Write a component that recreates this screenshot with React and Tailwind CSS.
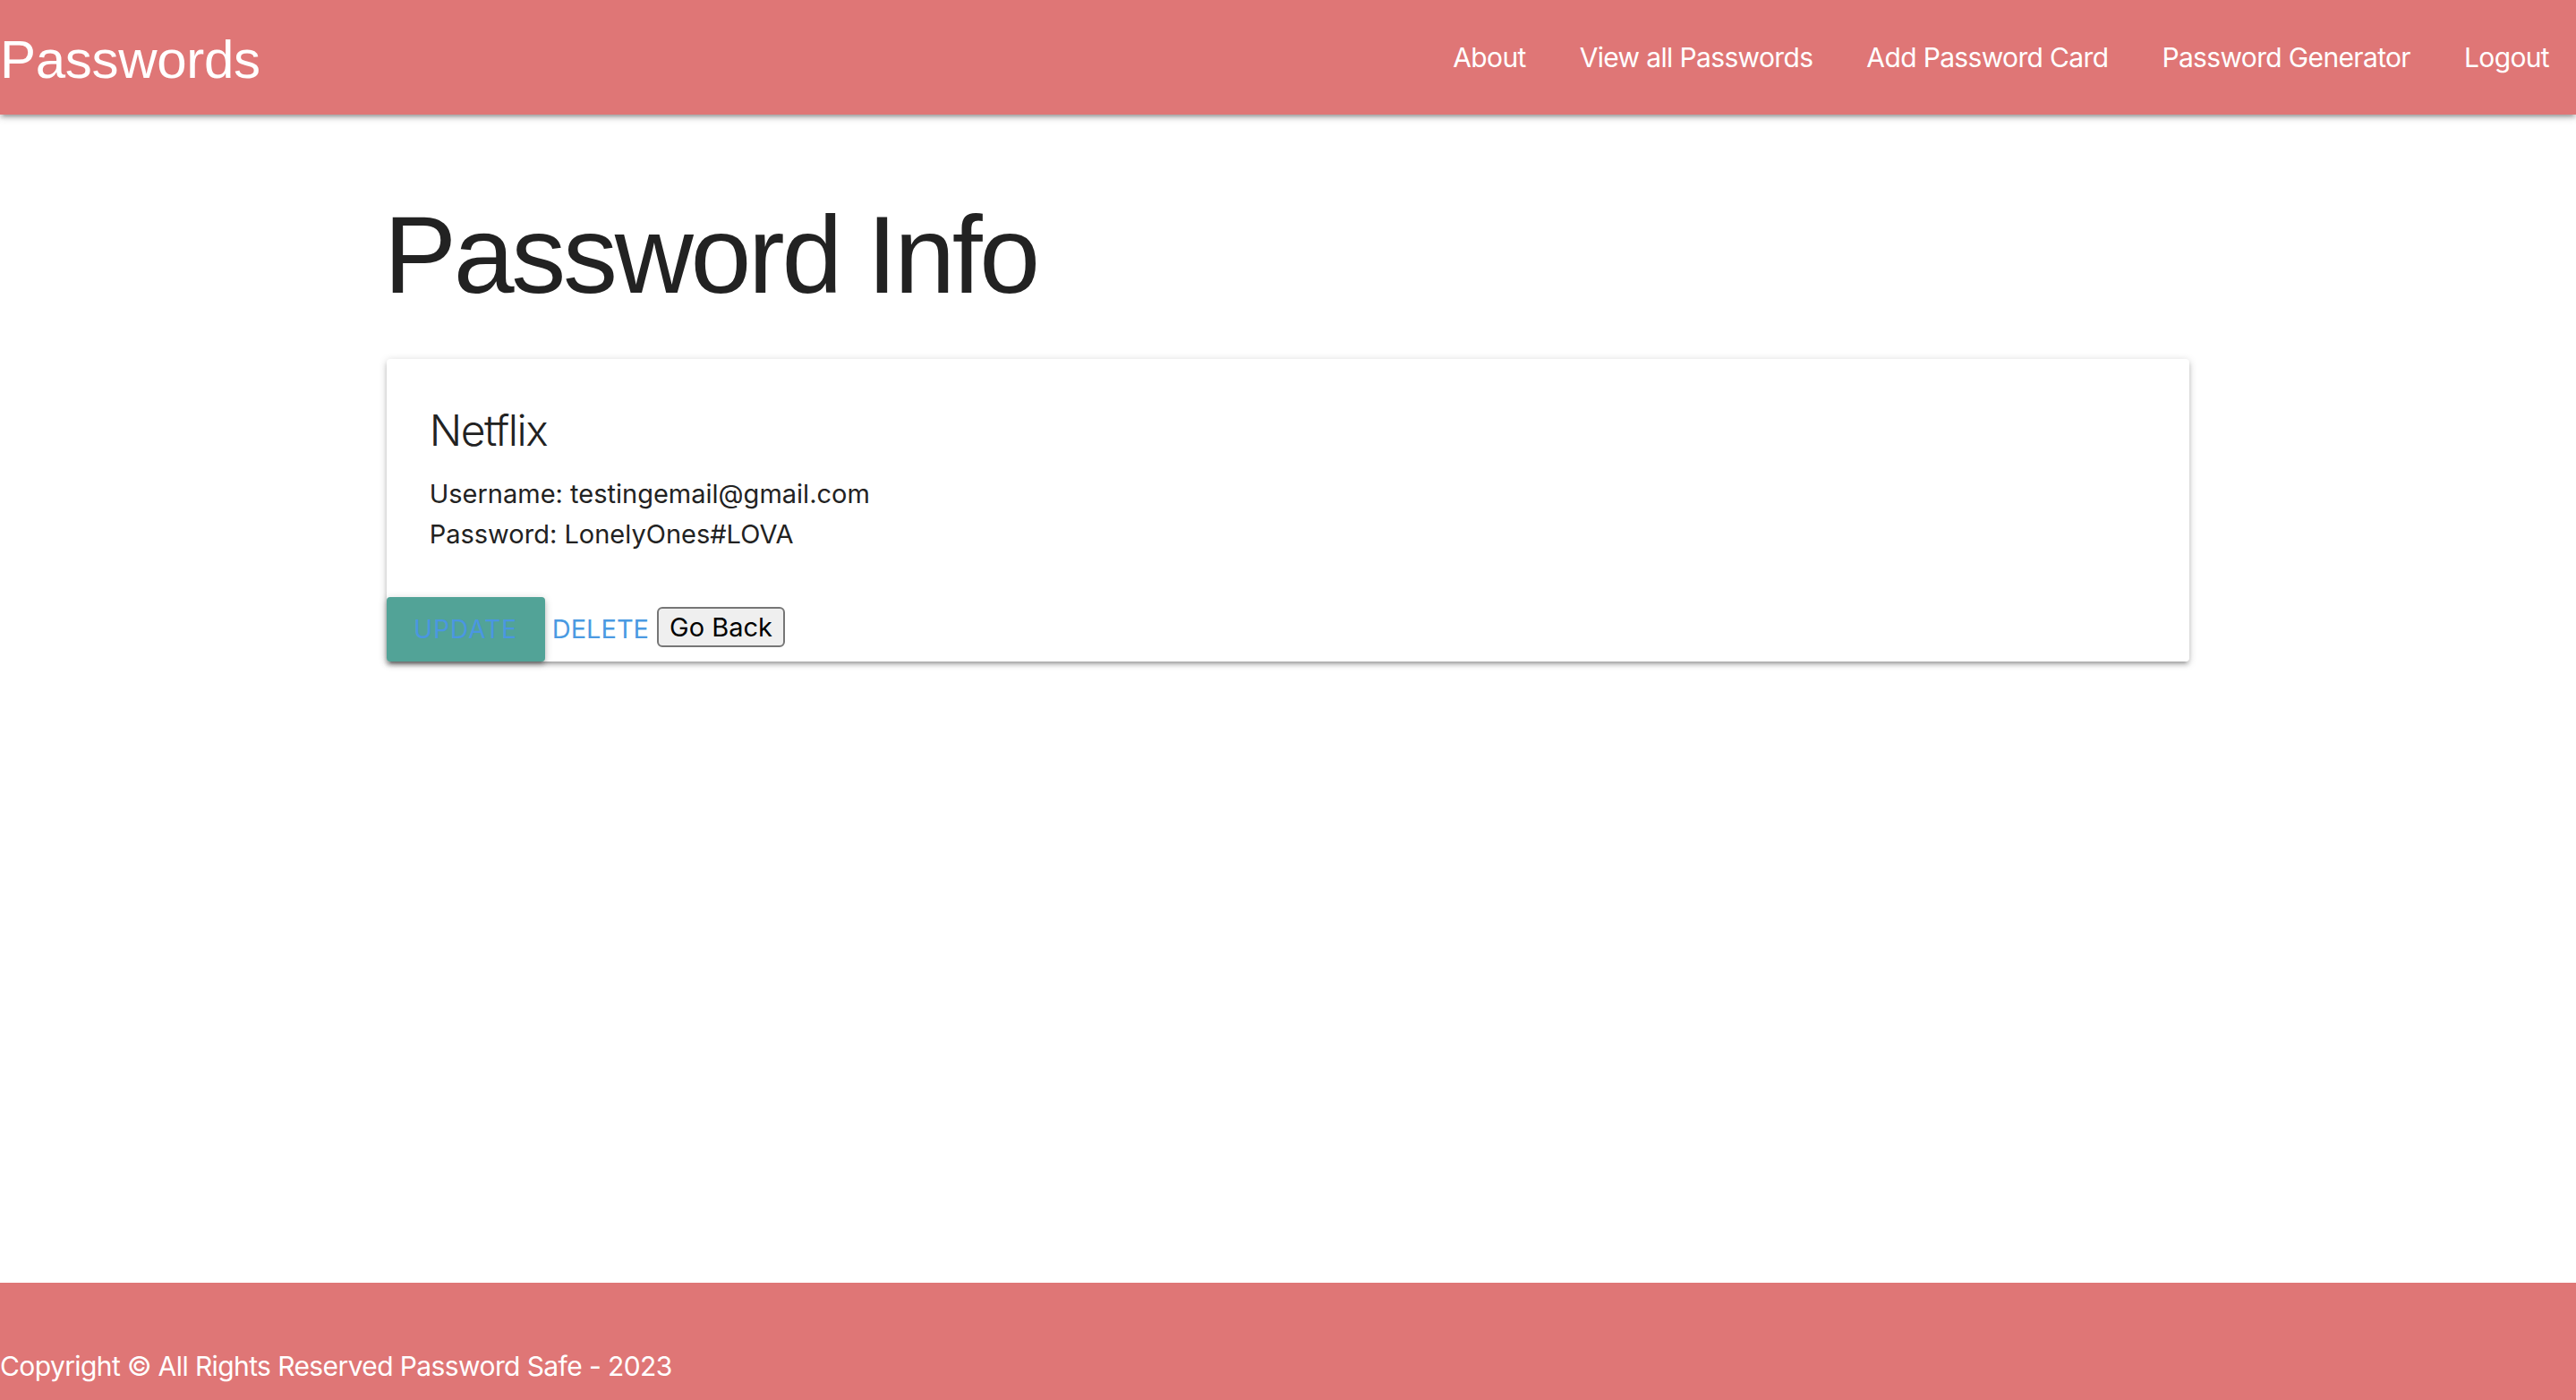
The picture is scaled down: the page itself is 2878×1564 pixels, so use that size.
const navLinks = ["About", "View all Passwords", "Add Password Card", "Password Generator", "Logout"];

function Navbar() {
    return (
        <nav className="relative z-10 flex h-[128px] items-start justify-between bg-[#df7676] text-white shadow-[0_4px_4px_0_rgba(0,0,0,0.14),0_6px_2px_-4px_rgba(0,0,0,0.12),0_2px_10px_0_rgba(0,0,0,0.2)]">
            <a href="#" className="font-['Liberation_Sans',Arial,sans-serif] text-[60px] leading-[134px] tracking-[-0.3px]">
                Passwords
            </a>
            <ul className="flex font-['Inter',sans-serif] text-[30px] leading-[128px] tracking-[-0.65px]">
                {navLinks.map((link) => (
                    <li key={link}>
                        <a href="#" className="block px-[30px]">
                            {link}
                        </a>
                    </li>
                ))}
            </ul>
        </nav>
    );
}

function PasswordCard() {
    return (
        <div className="rounded-[4px] bg-white shadow-[0_4px_4px_0_rgba(0,0,0,0.14),0_6px_2px_-4px_rgba(0,0,0,0.12),0_2px_10px_0_rgba(0,0,0,0.2)]">
            <div className="p-[48px] text-[#222]">
                <h2 className="mb-[16px] font-['Inter',sans-serif] text-[48px] font-light leading-[64px] tracking-[-1.5px]">
                    Netflix
                </h2>
                <p className="font-['Inter',sans-serif] text-[29px] leading-[45px]">Username: testingemail@gmail.com</p>
                <p className="font-['Inter',sans-serif] text-[29px] leading-[45px]">Password: LonelyOnes#LOVA</p>
            </div>
            <div className="flex items-baseline font-['Inter',sans-serif]">
                <a
                    href="#"
                    className="inline-block h-[72px] w-[177px] rounded-[4px] bg-[#52a397] text-center text-[28px] uppercase leading-[72px] tracking-[1px] text-[#4a96e2] shadow-[0_4px_4px_0_rgba(0,0,0,0.14),0_6px_2px_-4px_rgba(0,0,0,0.12),0_2px_10px_0_rgba(0,0,0,0.2)]"
                >
                    Update
                </a>
                <a href="#" className="ml-[8px] text-[29px] text-[#4a9ae2]">
                    DELETE
                </a>
                <button className="relative -top-[2px] ml-[9px] rounded-[6px] border-2 border-[#767676] bg-[#efefef] px-[12px] py-[2px] text-[29px] leading-[37px] text-black">
                    Go Back
                </button>
            </div>
        </div>
    );
}

function Footer() {
    return (
        <footer className="h-[131px] bg-[#df7676] pt-[71px] font-['Inter',sans-serif] text-[30px] leading-[45px] tracking-[-0.6px] text-white">
            Copyright © All Rights Reserved Password Safe - 2023
        </footer>
    );
}

export default function App() {
    return (
        <div className="flex min-h-screen flex-col bg-white">
            <Navbar />
            <main className="flex-1">
                <div className="mx-auto w-[70%]">
                    <h1 className="mt-[84px] mb-[50px] font-['Liberation_Sans',Arial,sans-serif] text-[122px] leading-[139px] tracking-[-3.3px] text-[#222]">
                        <span className="relative top-[4px] -left-[3px]">Password Info</span>
                    </h1>
                    <PasswordCard />
                </div>
            </main>
            <Footer />
        </div>
    );
}
